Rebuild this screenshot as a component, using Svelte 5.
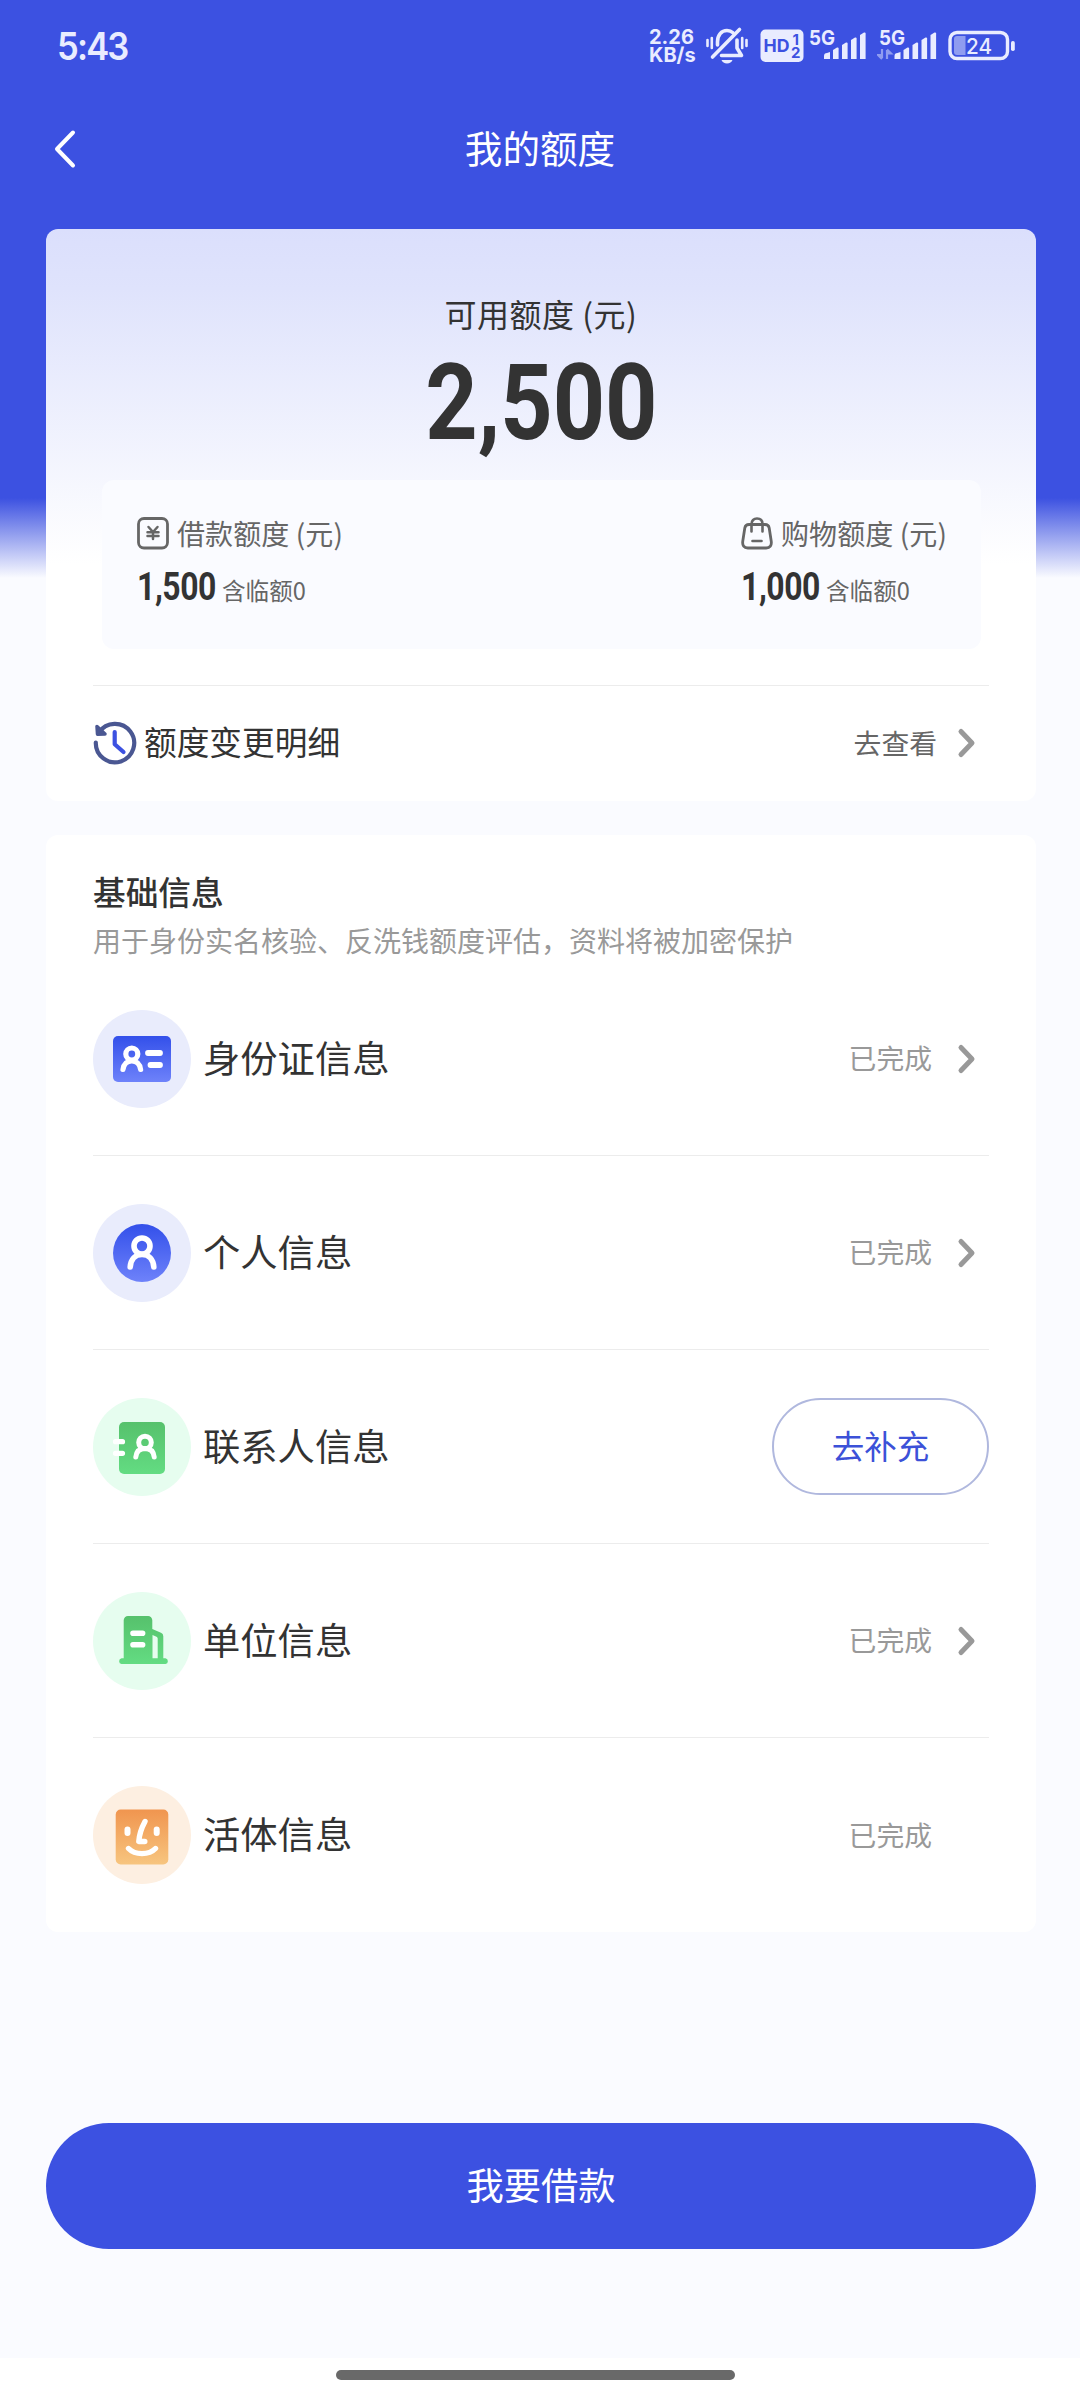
<script>
  const quotas = [
    { icon: 'yen', label: '借款额度 (元)', amount: '1,500', temp: '含临额0' },
    { icon: 'bag', label: '购物额度 (元)', amount: '1,000', temp: '含临额0' }
  ];

  const rows = [
    { icon: 'idcard', label: '身份证信息', done: true, arrow: true },
    { icon: 'person', label: '个人信息', done: true, arrow: true },
    { icon: 'contact', label: '联系人信息', done: false, arrow: false },
    { icon: 'company', label: '单位信息', done: true, arrow: true },
    { icon: 'face', label: '活体信息', done: true, arrow: false }
  ];
</script>

{#snippet chevron()}
  <svg class="chevron" width="20" height="32" viewBox="0 0 20 32">
    <path d="M4 4.500 15 16 4 27.500" fill="none" stroke="#999" stroke-width="5" stroke-linecap="round" stroke-linejoin="round" />
  </svg>
{/snippet}

{#snippet signal()}
  <path d="M0 26v-3a3 3 0 0 1 3-3l3-1v7z" />
  <path d="M9 26V17l4-2.500q1.600-.5 1.600 1V26z" />
  <path d="M18 26V12l4-2.500q1.600-.5 1.600 1V26z" />
  <path d="M27 26V7l4-2.500q1.600-.5 1.600 1V26z" />
  <path d="M36 26V2l4-2.500q1.600-.5 1.600 1V26z" />
{/snippet}

<div class="page">
  <div class="status-bar">
    <span class="time">5:43</span>
    <div class="status-icons">
      <div class="speed"><span>2.26</span><span>KB/s</span></div>
      <svg class="mute" width="42" height="40" viewBox="0 0 42 40">
        <g fill="none" stroke="#e9ecff" stroke-width="3" stroke-linecap="round" stroke-linejoin="round">
          <path d="M11.500 19v-3c0-7 4-11.500 9.500-11.500 2.500 0 4.500.8 6 2.200" stroke-width="3.600" />
          <path d="M31 14v8l4.500 7.500H15.500" stroke-width="3.600" />
          <path d="M33.500 3.500 6.500 31" stroke-width="3.600" />
          <path d="M1.500 14v6M5.800 12v10M36.200 12v10M40.500 14v6" stroke-width="2.600" />
        </g>
        <path d="M15.500 34h11c-.8 2.200-2.800 3.600-5.500 3.600s-4.700-1.400-5.500-3.600z" fill="#e9ecff" />
      </svg>
      <svg class="hd" width="44" height="40" viewBox="0 0 44 40">
        <rect x="0.500" y="3.500" width="43" height="32.500" rx="5" fill="#e9ecff" />
        <text x="3.500" y="26" font-size="18" font-weight="700" textLength="26" lengthAdjust="spacingAndGlyphs" fill="#3c51e1">HD</text>
        <text x="32.500" y="18.500" font-size="15" font-weight="700" fill="#3c51e1">1</text>
        <text x="31" y="32" font-size="15" font-weight="700" fill="#3c51e1">2</text>
      </svg>
      <svg class="net" width="58" height="40" viewBox="0 0 58 40" fill="#e9ecff">
        <text x="0" y="18.500" font-size="20.500" font-weight="700" textLength="26" lengthAdjust="spacingAndGlyphs">5G</text>
        <g transform="translate(15 7)">{@render signal()}</g>
      </svg>
      <svg class="net2" width="60" height="40" viewBox="0 0 60 40" fill="#e9ecff">
        <text x="2" y="18.500" font-size="20.500" font-weight="700" textLength="26" lengthAdjust="spacingAndGlyphs">5G</text>
        <path d="M5 23v9M5 33l-4-4h4M10 33v-9M10 23.500l4 4h-4" fill="none" stroke="#8f9cf0" stroke-width="2.200" />
        <g transform="translate(17.500 7)">{@render signal()}</g>
      </svg>
      <svg width="68" height="40" viewBox="0 0 68 40">
        <rect x="2" y="6.500" width="57.500" height="26" rx="7" fill="none" stroke="#e9ecff" stroke-width="3.400" />
        <path d="M9 10h8.500v19H9a3 3 0 0 1-3-3V13a3 3 0 0 1 3-3z" fill="#8f9cf0" />
        <rect x="63" y="15" width="3.800" height="10" rx="1.800" fill="#e9ecff" />
        <text x="18" y="27.500" font-size="22" font-weight="500" textLength="26" lengthAdjust="spacingAndGlyphs" fill="#e9ecff">24</text>
      </svg>
    </div>
  </div>

  <header class="nav">
    <button class="back" aria-label="返回">
      <svg width="24" height="40" viewBox="0 0 24 40">
        <path d="M21 3.500 5 20l16 16.500" fill="none" stroke="#fff" stroke-width="4" stroke-linecap="round" stroke-linejoin="round" />
      </svg>
    </button>
    <h1>我的额度</h1>
  </header>

  <section class="card quota-card">
    <p class="quota-title">可用额度 (元)</p>
    <p class="quota-total"><span>2,500</span></p>

    <div class="quota-panel">
      {#each quotas as q}
        <div class="quota-item">
          <div class="quota-label">
            {#if q.icon === 'yen'}
              <svg width="32" height="34" viewBox="0 0 32 34" fill="none" stroke="#666" stroke-linecap="round">
                <rect x="1.500" y="2.500" width="29" height="29.500" rx="5.500" stroke-width="2.800" />
                <path d="M11.500 11l4.500 5 4.500-5M10.500 16.300h11M10.500 20h11M16 16v7" stroke-width="2.500" />
              </svg>
            {:else}
              <svg width="32" height="34" viewBox="0 0 32 34" fill="none" stroke="#666" stroke-linecap="round">
                <path d="M8 8.500h16c2.500 0 3.800 1.300 4.200 3.500l2 13c.7 4.500-1.200 7-5 7H6.800c-3.800 0-5.700-2.500-5-7l2-13C4.200 9.800 5.500 8.500 8 8.500z" stroke-width="2.800" />
                <path d="M10.500 15.500V8.200C10.500 4.500 12.800 2.500 16 2.500s5.500 2 5.500 5.700v7.300" stroke-width="2.600" />
                <path d="M11.500 25h9" stroke-width="2.600" />
              </svg>
            {/if}
            <span>{q.label}</span>
          </div>
          <div class="quota-value">
            <span class="amount"><b>{q.amount}</b></span>
            <span class="temp">{q.temp}</span>
          </div>
        </div>
      {/each}
    </div>

    <div class="history">
      <svg width="44" height="44" viewBox="0 0 44 44" fill="none" stroke-linecap="round" stroke-linejoin="round">
        <path d="M2.800 21.500A19.200 19.200 0 1 0 6 11.500" stroke="#4a5792" stroke-width="4.200" />
        <path d="M4 5.500 4.500 13.200 12 13z" fill="#4a5792" stroke="#4a5792" stroke-width="3.500" />
        <path d="M21.700 11v12.200l8.800 7.800" stroke="#3c51e1" stroke-width="4.200" />
      </svg>
      <span class="history-label">额度变更明细</span>
      <span class="history-link">去查看</span>
      {@render chevron()}
    </div>
  </section>

  <section class="card info-card">
    <h2>基础信息</h2>
    <p class="hint">用于身份实名核验、反洗钱额度评估，资料将被加密保护</p>

    {#each rows as row}
      <div class="row">
        <svg class="row-icon" width="98" height="98" viewBox="0 0 98 98">
          <defs>
            <linearGradient id="blue" x1="0" y1="0" x2="0" y2="1"><stop offset="0" stop-color="#3350ea" /><stop offset="1" stop-color="#6e82fa" /></linearGradient>
            <linearGradient id="green" x1="0" y1="0" x2="0" y2="1"><stop offset="0" stop-color="#56c16c" /><stop offset="1" stop-color="#63dc82" /></linearGradient>
            <linearGradient id="orange" x1="0" y1="0" x2="0" y2="1"><stop offset="0" stop-color="#f0954f" /><stop offset="1" stop-color="#f7c57f" /></linearGradient>
          </defs>
          {#if row.icon === 'idcard'}
            <circle cx="49" cy="49" r="49" fill="#e9ecfc" />
            <rect x="20" y="26" width="58" height="46" rx="5" fill="url(#blue)" />
            <g fill="none" stroke="#fff" stroke-width="5.200" stroke-linecap="round">
              <circle cx="38.800" cy="44" r="6" />
              <path d="M30 59.500c.8-5.500 4-8.500 8.800-8.500s8 3 8.800 8.500" />
              <path d="M55 43h12M57.500 55H67" stroke-width="5.800" />
            </g>
          {:else if row.icon === 'person'}
            <circle cx="49" cy="49" r="49" fill="#e9ecfc" />
            <circle cx="49" cy="49" r="29" fill="url(#blue)" />
            <g fill="none" stroke="#fff" stroke-width="5.600" stroke-linecap="round">
              <circle cx="49" cy="42" r="8" />
              <path d="M37.200 63c.6-7.500 5-12.500 11.800-12.500S60.200 55.500 60.800 63" />
            </g>
          {:else if row.icon === 'contact'}
            <circle cx="49" cy="49" r="49" fill="#e6fdef" />
            <rect x="26" y="24" width="46" height="52" rx="5" fill="url(#green)" />
            <g fill="none" stroke="#fff" stroke-width="5" stroke-linecap="round">
              <circle cx="52" cy="44.500" r="6.300" />
              <path d="M42.800 59c.6-5.500 3.800-8.500 9.200-8.500s8.600 3 9.200 8.500" />
              <path d="M22.500 43.700h7M22.500 55.300h7" stroke-width="5.200" />
            </g>
          {:else if row.icon === 'company'}
            <circle cx="49" cy="49" r="49" fill="#e6fdef" />
            <path fill="url(#green)" fill-rule="evenodd" d="M35 24h20a4.300 4.300 0 0 1 4.300 4.300V37l8.700 3.800a3.800 3.800 0 0 1 2.300 3.500v22h2.200a2.900 2.900 0 0 1 0 5.700H28.500a2.900 2.900 0 0 1 0-5.700h2.200v-38A4.300 4.300 0 0 1 35 24zM59.500 43v23.300h5.200V46.500a2 2 0 0 0-1.200-1.800z" />
            <path d="M40 41.300h9.600M40 52.700h9.600" stroke="#fff" stroke-width="5.600" stroke-linecap="round" />
          {:else}
            <circle cx="49" cy="49" r="49" fill="#fdefe1" />
            <rect x="22.700" y="23.500" width="52.600" height="55" rx="5" fill="url(#orange)" />
            <rect x="31.500" y="40.500" width="6" height="9.500" rx="3" fill="#fff" />
            <rect x="60.700" y="40.500" width="6" height="9.500" rx="3" fill="#fff" />
            <g fill="none" stroke="#fff" stroke-width="5.400" stroke-linecap="round" stroke-linejoin="round">
              <path d="M52 35.500C48.500 42 46.200 48 45.800 55.500h6" />
              <path d="M35.500 62.500c6.500 6.800 20.500 6.800 27 0" />
            </g>
          {/if}
        </svg>
        <span class="row-label">{row.label}</span>
        {#if row.done}
          <span class="done">已完成</span>
          {#if row.arrow}
            {@render chevron()}
          {:else}
            <span class="chevron"></span>
          {/if}
        {:else}
          <button class="fill-btn">去补充</button>
        {/if}
      </div>
    {/each}
  </section>

  <button class="submit">我要借款</button>

  <div class="gesture"><span></span></div>
</div>

<style>
  :global(body) {
    margin: 0;
  }

  .page {
    display: flex;
    flex-direction: column;
    width: 1080px;
    height: 2400px;
    box-sizing: border-box;
    background: linear-gradient(#3c51e1 0, #3c51e1 498px, #fafbff 578px);
    font-family: "Noto Sans CJK SC", sans-serif;
    color: #333;
    overflow: hidden;
  }

  h1,
  h2,
  p {
    margin: 0;
    font-weight: 400;
  }

  button {
    font-family: inherit;
    cursor: pointer;
    padding: 0;
  }

  svg {
    display: block;
    flex: none;
  }

  .status-bar {
    display: flex;
    justify-content: space-between;
    align-items: center;
    height: 92px;
    padding: 0 64px 0 57px;
    font-family: Inter, sans-serif;
    color: #e9ecff;
  }

  .time {
    font-size: 38px;
    font-weight: 600;
    letter-spacing: -2px;
    transform: scaleX(0.91);
    transform-origin: left;
  }

  .status-icons {
    display: flex;
    align-items: center;
    height: 40px;
  }

  .speed {
    display: flex;
    flex-direction: column;
    width: 57px;
    font-size: 20px;
    font-weight: 700;
    line-height: 18.5px;
  }

  .hd {
    margin-left: 12px;
  }

  .net {
    margin-left: 5px;
  }

  .net2 {
    margin-left: 10px;
  }

  .net2 + svg {
    margin-left: 11px;
  }

  .nav {
    display: flex;
    align-items: center;
    height: 114px;
    padding: 0 52px;
  }

  .back {
    display: flex;
    width: 24px;
    border: none;
    background: none;
  }

  .nav h1 {
    flex: 1;
    margin-right: 24px;
    padding-bottom: 5px;
    text-align: center;
    font-size: 37.6px;
    line-height: 50px;
    color: #fff;
  }

  .card {
    margin: 0 44px 0 46px;
    border-radius: 12px;
    background: #fff;
    box-sizing: border-box;
  }

  .quota-card {
    height: 572px;
    margin-top: 23px;
    padding: 61px 47px 0 47px;
    background: linear-gradient(#dbdffc 0, #dfe3fc 60px, #fff 335px);
  }

  .quota-title {
    text-align: center;
    font-size: 32px;
    line-height: 46px;
    letter-spacing: 0.5px;
  }

  .quota-total {
    height: 131px;
    text-align: center;
    font-family: Roboto, sans-serif;
    font-size: 105px;
    font-weight: 700;
    line-height: 135px;
  }

  .quota-total span {
    display: inline-block;
    transform: scaleX(0.87);
  }

  .quota-panel {
    display: flex;
    justify-content: space-between;
    height: 169px;
    margin: 13px 8px 36px 9px;
    padding: 32px 34px 0 35px;
    box-sizing: border-box;
    border-radius: 12px;
    background: #fafbff;
  }

  .quota-label {
    display: flex;
    align-items: center;
    gap: 8px;
    height: 42px;
    font-size: 28px;
    line-height: 40px;
    letter-spacing: 0.1px;
    color: #666;
  }

  .quota-value {
    display: flex;
    align-items: baseline;
    margin-top: 10px;
    line-height: 46px;
  }

  .amount {
    width: 85px;
    font-family: Roboto, sans-serif;
    font-size: 38px;
  }

  .amount b {
    display: inline-block;
    transform: scaleX(0.84);
    transform-origin: left;
    letter-spacing: -0.5px;
  }

  .temp {
    font-size: 23.6px;
    color: #666;
  }

  .history {
    display: flex;
    align-items: center;
    height: 114px;
    border-top: 1px solid #ececec;
  }

  .history-label {
    flex: 1;
    margin-left: 7px;
    padding-bottom: 4px;
    font-size: 32.7px;
    line-height: 46px;
  }

  .history-link {
    padding-bottom: 3px;
    font-size: 27.8px;
    line-height: 40px;
    color: #666;
  }

  .chevron {
    width: 20px;
    margin: 0 12px 0 20px;
  }

  .info-card {
    height: 1097px;
    margin-top: 34px;
    padding: 33px 47px 0 47px;
  }

  h2 {
    font-size: 32.7px;
    font-weight: 500;
    line-height: 46px;
  }

  .hint {
    margin-bottom: 1px;
    padding-top: 5px;
    font-size: 28px;
    line-height: 42px;
    color: #999;
    white-space: nowrap;
  }

  .row {
    display: flex;
    align-items: center;
    height: 194px;
    box-sizing: border-box;
    border-bottom: 1px solid #ececec;
  }

  .row:last-child {
    border-bottom: none;
  }

  .row-label {
    flex: 1;
    margin-left: 12px;
    padding-bottom: 4px;
    font-size: 37.3px;
    line-height: 52px;
  }

  .done {
    padding-bottom: 3px;
    font-size: 27.8px;
    line-height: 40px;
    color: #999;
    margin-right: 5px;
  }

  .fill-btn {
    width: 217px;
    height: 97px;
    padding-bottom: 4px;
    border: 2px solid #b0b8de;
    border-radius: 49px;
    background: #fff;
    font-size: 32.5px;
    color: #3c51d8;
  }

  .submit {
    flex: none;
    height: 126px;
    margin: 191px 44px 0 46px;
    padding-bottom: 4px;
    border: none;
    border-radius: 63px;
    background: #3c51e1;
    font-size: 37.3px;
    color: #fff;
  }

  .gesture {
    flex: 1;
    display: flex;
    justify-content: center;
    margin-top: 109px;
    padding: 12px 9px 0 0;
    background: #fff;
  }

  .gesture span {
    width: 399px;
    height: 10px;
    border-radius: 5px;
    background: #696969;
  }
</style>
